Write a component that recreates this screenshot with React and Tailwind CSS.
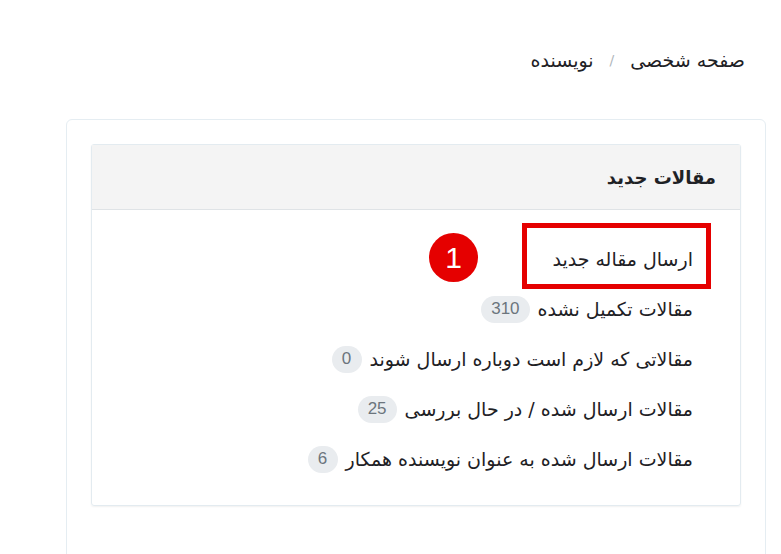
import React from "react";

const items = [
  { t: "ارسال مقاله جدید" },
  { t: "مقالات تکمیل نشده", n: "310" },
  { t: "مقالاتی که لازم است دوباره ارسال شوند", n: "0" },
  { t: "مقالات ارسال شده / در حال بررسی", n: "25" },
  { t: "مقالات ارسال شده به عنوان نویسنده همکار", n: "6" },
];

export default function App() {
  return (
    <div
      dir="rtl"
      className="relative w-[781px] h-[554px] overflow-hidden bg-white text-[#1e2125]"
      style={{ fontFamily: '"DejaVu Sans", "Noto Sans", sans-serif' }}
    >
      <div className="flex items-center gap-4 pr-[36px] pt-[48px] h-[72px] text-[19px]">
        <span>صفحه شخصی</span>
        <span className="text-[#b0b6bb] text-[14px]">/</span>
        <span>نویسنده</span>
      </div>
      <div className="mt-[47px] mr-[15px] w-[700px] h-[460px] border border-[#e5edf2] rounded-md p-6">
        <div className="border border-[#e3ebf0] rounded-[3px] shadow-[0_1px_2px_rgba(0,0,0,0.06)]">
          <div className="h-[65px] bg-[#f4f4f4] border-b border-[#dfe3e6] flex items-center pr-6 font-bold text-[18px]">
            مقالات جدید
          </div>
          <ul className="pr-[47px] pt-[24px] pb-[21px] text-[19px]">
            {items.map((it, i) => (
              <li key={i} className="h-[50px] flex items-center gap-2">
                <span>{it.t}</span>
                {it.n && (
                  <span
                    className="inline-flex items-center justify-center h-[27px] px-[10px] min-w-[30px] rounded-full bg-[#e9ecef] text-[#6c757d] text-[17px]"
                    style={{ fontFamily: '"Liberation Sans", Arial, sans-serif' }}
                  >
                    {it.n}
                  </span>
                )}
              </li>
            ))}
          </ul>
        </div>
      </div>
      <div className="absolute left-[522px] top-[223px] w-[189px] h-[66px] border-[5px] border-[#e50000]" />
      <div
        className="absolute left-[429px] top-[233px] w-[49px] h-[49px] rounded-full bg-[#e50000] text-white flex items-center justify-center text-[30px]"
        style={{ fontFamily: '"Liberation Sans", Arial, sans-serif' }}
      >
        1
      </div>
    </div>
  );
}
